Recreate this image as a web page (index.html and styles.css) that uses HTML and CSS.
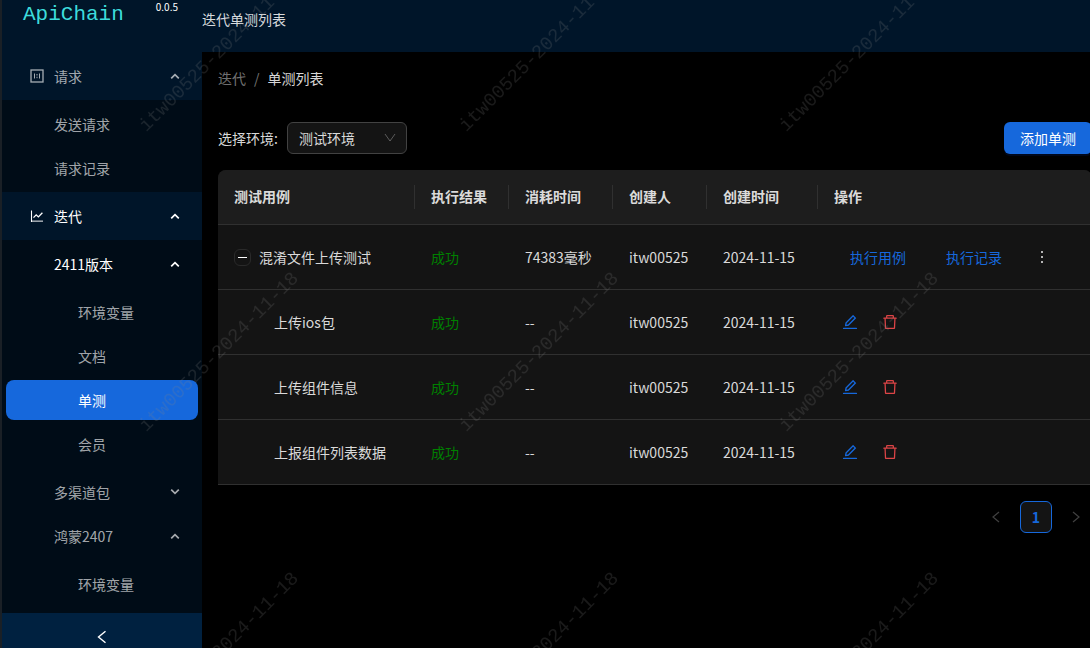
FILE: index.html
```
<!DOCTYPE html>
<html lang="zh-CN">
<head>
    <meta charset="UTF-8">
    <meta name="viewport" content="width=device-width, initial-scale=1.0">
    <title>ApiChain - 迭代单测列表</title>
    <link rel="stylesheet" href="styles.css">
</head>
<body>
    <!-- shared icons -->
    <svg class="sprite" aria-hidden="true">
        <symbol id="icon-arrow" viewBox="0 0 10 10"><path d="M1.2 7.400 5 3.600l3.800 3.800" fill="none" stroke="currentColor" stroke-width="1.7"/></symbol>
        <symbol id="icon-left" viewBox="0 0 12 12"><path d="M9 1 3 6l6 5" fill="none" stroke="currentColor" stroke-width="1.2"/></symbol>
        <symbol id="icon-edit" viewBox="0 0 1024 1024"><path fill="currentColor" d="M257.700 752c2 0 4-.2 6-.5L431.900 722c2-.4 3.900-1.300 5.300-2.800l423.900-423.900a9.960 9.960 0 0 0 0-14.100L694.900 114.900c-1.900-1.900-4.400-2.900-7.100-2.900s-5.200 1-7.100 2.900L256.800 538.800c-1.500 1.500-2.400 3.300-2.800 5.300l-29.500 168.200a33.500 33.500 0 0 0 9.400 29.800c6.600 6.400 14.900 9.900 23.800 9.900zm67.400-174.400L687.800 215l73.300 73.300-362.700 362.600-88.900 15.700 15.600-89zM880 836H144c-17.700 0-32 14.300-32 32v36c0 4.400 3.600 8 8 8h784c4.400 0 8-3.600 8-8v-36c0-17.700-14.300-32-32-32z"/></symbol>
        <symbol id="icon-delete" viewBox="0 0 1024 1024"><path fill="currentColor" d="M360 184h-8c4.400 0 8-3.600 8-8v8h304v-8c0 4.400 3.600 8 8 8h-8v72h72v-80c0-35.300-28.700-64-64-64H352c-35.300 0-64 28.700-64 64v80h72v-72zm504 72H160c-17.700 0-32 14.300-32 32v32c0 4.400 3.600 8 8 8h60.400l24.700 523c1.600 34.100 29.800 61 63.900 61h454c34.200 0 62.300-26.800 63.900-61l24.700-523H888c4.400 0 8-3.600 8-8v-32c0-17.700-14.300-32-32-32zM731.300 840H292.700l-24.200-512h487l-24.200 512z"/></symbol>
    </svg>

    <aside class="sider">
        <div class="brand">
            <span class="logo">ApiChain</span>
            <span class="version">0.0.5</span>
        </div>
        <nav class="menu">
            <ul>
                <li>
                    <button class="menu-item">
                        <svg class="menu-icon" viewBox="0 0 14 14" fill="none" stroke="currentColor"><rect x="1" y="1" width="12" height="12" stroke-width="1.3"/><path d="M4.500 4.500v5M9.500 4.500v5M7 5v1.500M7 7.700v1.500"/></svg>
                        <span>请求</span>
                        <svg class="arrow"><use href="#icon-arrow"/></svg>
                    </button>
                    <ul class="sub">
                        <li><a class="menu-item level-2" href="#">发送请求</a></li>
                        <li><a class="menu-item level-2" href="#">请求记录</a></li>
                    </ul>
                </li>
                <li>
                    <button class="menu-item open">
                        <svg class="menu-icon" viewBox="0 0 14 14" fill="none" stroke="currentColor"><path d="M1.500 1.500V13" stroke-width="1.100"/><path d="M1 12.200h12" stroke-width="1.600" stroke-opacity=".6"/><path d="m3.500 8.600 2.700-2.800 2.200 2.100 4-4.100" stroke-width="1.300"/></svg>
                        <span>迭代</span>
                        <svg class="arrow"><use href="#icon-arrow"/></svg>
                    </button>
                    <ul class="sub">
                        <li>
                            <button class="menu-item level-2 open"><span>2411版本</span><svg class="arrow"><use href="#icon-arrow"/></svg></button>
                            <ul class="sub">
                                <li><a class="menu-item level-3" href="#">环境变量</a></li>
                                <li><a class="menu-item level-3" href="#">文档</a></li>
                                <li><a class="menu-item level-3 selected" href="#">单测</a></li>
                                <li><a class="menu-item level-3" href="#">会员</a></li>
                            </ul>
                        </li>
                        <li>
                            <button class="menu-item level-2"><span>多渠道包</span><svg class="arrow down"><use href="#icon-arrow"/></svg></button>
                        </li>
                        <li>
                            <button class="menu-item level-2"><span>鸿蒙2407</span><svg class="arrow"><use href="#icon-arrow"/></svg></button>
                            <ul class="sub last">
                                <li><a class="menu-item level-3" href="#">环境变量</a></li>
                            </ul>
                        </li>
                    </ul>
                </li>
            </ul>
        </nav>
        <button class="trigger" aria-label="收起菜单"><svg><use href="#icon-left"/></svg></button>
    </aside>

    <div class="layout">
        <header class="header">迭代单测列表</header>
        <main class="content">
            <nav class="breadcrumb">
                <a href="#">迭代</a>
                <span class="separator">/</span>
                <span>单测列表</span>
            </nav>

            <div class="toolbar">
                <label for="env">选择环境:</label>
                <div class="select">
                    <select id="env" name="env">
                        <option>测试环境</option>
                    </select>
                    <svg class="select-arrow" viewBox="0 0 12 12"><path d="m1 2 5 7 5-7" fill="none" stroke="currentColor"/></svg>
                </div>
                <button class="btn-primary">添加单测</button>
            </div>

            <table class="table">
                <colgroup>
                    <col class="col-name">
                    <col class="col-result">
                    <col class="col-cost">
                    <col class="col-user">
                    <col class="col-time">
                    <col>
                </colgroup>
                <thead>
                    <tr>
                        <th>测试用例</th>
                        <th>执行结果</th>
                        <th>消耗时间</th>
                        <th>创建人</th>
                        <th>创建时间</th>
                        <th>操作</th>
                    </tr>
                </thead>
                <tbody>
                    <tr>
                        <td><div class="name"><button class="expand" aria-label="收起"></button>混淆文件上传测试</div></td>
                        <td class="success">成功</td>
                        <td>74383毫秒</td>
                        <td>itw00525</td>
                        <td>2024-11-15</td>
                        <td>
                            <div class="actions">
                                <button class="btn-link">执行用例</button>
                                <button class="btn-link">执行记录</button>
                                <button class="btn-icon more" aria-label="更多"><svg viewBox="0 0 18 18" fill="currentColor"><path d="M8 3h2v2H8zM8 8h2v2H8zM8 13h2v2H8z"/></svg></button>
                            </div>
                        </td>
                    </tr>
                    <tr>
                        <td class="child">上传ios包</td>
                        <td class="success">成功</td>
                        <td>--</td>
                        <td>itw00525</td>
                        <td>2024-11-15</td>
                        <td>
                            <div class="actions">
                                <button class="btn-icon edit" aria-label="编辑"><svg><use href="#icon-edit"/></svg></button>
                                <button class="btn-icon delete" aria-label="删除"><svg><use href="#icon-delete"/></svg></button>
                            </div>
                        </td>
                    </tr>
                    <tr>
                        <td class="child">上传组件信息</td>
                        <td class="success">成功</td>
                        <td>--</td>
                        <td>itw00525</td>
                        <td>2024-11-15</td>
                        <td>
                            <div class="actions">
                                <button class="btn-icon edit" aria-label="编辑"><svg><use href="#icon-edit"/></svg></button>
                                <button class="btn-icon delete" aria-label="删除"><svg><use href="#icon-delete"/></svg></button>
                            </div>
                        </td>
                    </tr>
                    <tr>
                        <td class="child">上报组件列表数据</td>
                        <td class="success">成功</td>
                        <td>--</td>
                        <td>itw00525</td>
                        <td>2024-11-15</td>
                        <td>
                            <div class="actions">
                                <button class="btn-icon edit" aria-label="编辑"><svg><use href="#icon-edit"/></svg></button>
                                <button class="btn-icon delete" aria-label="删除"><svg><use href="#icon-delete"/></svg></button>
                            </div>
                        </td>
                    </tr>
                </tbody>
            </table>

            <div class="pagination">
                <button disabled aria-label="上一页"><svg><use href="#icon-left"/></svg></button>
                <button class="active">1</button>
                <button disabled aria-label="下一页"><svg class="next"><use href="#icon-left"/></svg></button>
            </div>
        </main>
    </div>

    <!-- watermark over the whole page -->
    <svg class="watermark" aria-hidden="true">
        <defs>
            <pattern id="mark" x="60" y="-100" width="320" height="300" patternUnits="userSpaceOnUse">
                <text x="158" y="156" text-anchor="middle" transform="rotate(-45 160 150)">itw00525-2024-11-18</text>
            </pattern>
        </defs>
        <rect width="100%" height="100%" fill="url(#mark)"/>
    </svg>
</body>
</html>
```
FILE: styles.css
```
* {
    box-sizing: border-box;
}
body {
    margin: 0;
    padding-left: 2px;
    display: flex;
    height: 100vh;
    overflow: hidden;
    background-color: #1a2026;
    color: rgba(255, 255, 255, 0.85);
    font-family: "Noto Sans CJK SC", sans-serif;
    font-size: 14px;
    line-height: 22px;
}
button, select {
    font: inherit;
    color: inherit;
    border: none;
    background: none;
    padding: 0;
    cursor: pointer;
}
a {
    color: inherit;
    text-decoration: none;
}
ul {
    list-style: none;
    margin: 0;
    padding: 0;
}
.sprite {
    display: none;
}

/* sider */
.sider {
    width: 200px;
    flex-shrink: 0;
    display: flex;
    flex-direction: column;
    background-color: #001529;
}
.brand {
    height: 52px;
    flex-shrink: 0;
    display: flex;
    justify-content: space-between;
    padding: 0 24px 0 21px;
}
.logo {
    font-family: "Liberation Mono", monospace;
    font-size: 21px;
    line-height: 30px;
    color: #3ddcdc;
}
.version {
    font-size: 10px;
    line-height: 14px;
    color: #fff;
}
.menu {
    flex: 1;
    min-height: 0;
    overflow: hidden;
}
.sub {
    display: flow-root;
    background-color: #000c17;
}
.sub.last {
    padding-bottom: 16px;
}
.menu-item {
    display: flex;
    align-items: center;
    width: 192px;
    height: 40px;
    margin: 4px;
    padding: 0 18px 0 24px;
    border-radius: 8px;
    color: rgba(255, 255, 255, 0.65);
}
.menu-item.level-2 {
    padding-left: 48px;
}
.menu-item.level-3 {
    padding-left: 72px;
}
.menu-item.open {
    color: #fff;
}
.menu-item.selected {
    color: #fff;
    background-color: #1668dc;
}
.menu-icon {
    width: 14px;
    height: 14px;
    margin-right: 10px;
}
.arrow {
    width: 10px;
    height: 10px;
    margin-left: auto;
}
.arrow.down {
    transform: rotate(180deg);
}
.trigger {
    flex-shrink: 0;
    display: flex;
    justify-content: center;
    padding: 17px 0 4px;
    background-color: #002140;
    color: #fff;
}
.trigger svg {
    width: 14px;
    height: 14px;
}

/* right side */
.layout {
    flex: 1;
    min-width: 0;
    overflow: hidden;
    background-color: #000;
}
.header {
    height: 52px;
    padding-top: 8px;
    background-color: #001529;
}
.content {
    padding: 15px 0 16px 16px;
    margin-right: -2px;
}
.breadcrumb {
    display: flex;
    gap: 8px;
    margin-bottom: 33px;
}
.breadcrumb a, .separator {
    color: rgba(255, 255, 255, 0.45);
}
.toolbar {
    display: flex;
    align-items: center;
    gap: 9px;
    margin-bottom: 16px;
}
.select {
    position: relative;
    width: 120px;
}
.select select {
    appearance: none;
    width: 100%;
    height: 32px;
    padding: 0 11px;
    border: 1px solid #424242;
    border-radius: 6px;
    background-color: #141414;
}
.select-arrow {
    position: absolute;
    right: 11px;
    top: 10px;
    width: 12px;
    height: 12px;
    color: rgba(255, 255, 255, 0.3);
    pointer-events: none;
}
.btn-primary {
    height: 32px;
    margin-left: auto;
    padding: 0 16px;
    border-radius: 6px;
    background-color: #1668dc;
    color: #fff;
    box-shadow: 0 2px 0 rgba(0, 21, 70, 0.4);
}

/* table */
.table {
    width: 100%;
    table-layout: fixed;
    border-collapse: separate;
    border-spacing: 0;
    background-color: #141414;
    border-radius: 8px 8px 0 0;
}
.col-name {
    width: 197px;
}
.col-result, .col-user {
    width: 94px;
}
.col-cost {
    width: 104px;
}
.col-time {
    width: 111px;
}
.table th, .table td {
    padding: 16px;
    text-align: left;
    white-space: nowrap;
    border-bottom: 1px solid #303030;
}
.table th {
    padding: 15px 16px 17px;
    background: #1d1d1d linear-gradient(#303030, #303030) no-repeat right center / 1px 24px;
    font-weight: 700;
}
.table th:first-child {
    border-top-left-radius: 8px;
}
.table th:last-child {
    border-top-right-radius: 8px;
    background-image: none;
}
.name {
    display: flex;
    align-items: center;
    gap: 8px;
}
.expand {
    display: flex;
    align-items: center;
    justify-content: center;
    width: 17px;
    height: 17px;
    border: 1px solid #2a2a2a;
    border-radius: 6px;
}
.expand::before {
    content: "";
    width: 9px;
    height: 1px;
    background-color: #fff;
}
.table .child {
    padding-left: 56px;
}
.success {
    color: green;
}
.actions {
    display: flex;
    gap: 8px;
}
.btn-link {
    height: 32px;
    padding: 0 16px;
    color: #1668dc;
}
.btn-icon {
    display: flex;
    align-items: center;
    justify-content: center;
    width: 32px;
    height: 32px;
}
.btn-icon svg {
    width: 18px;
    height: 18px;
}
.more {
    color: #b5b5b5;
}
.edit {
    color: #1668dc;
}
.delete {
    color: #dc4446;
}

/* pagination */
.pagination {
    display: flex;
    justify-content: flex-end;
    gap: 8px;
    margin-top: 16px;
}
.pagination button {
    display: flex;
    align-items: center;
    justify-content: center;
    width: 32px;
    height: 32px;
    border-radius: 6px;
    color: rgba(255, 255, 255, 0.25);
}
.pagination .active {
    border: 1px solid #1668dc;
    background-color: #141414;
    color: #1668dc;
    font-weight: 700;
}
.pagination svg {
    width: 12px;
    height: 12px;
}
.next {
    transform: rotate(180deg);
}

.watermark {
    position: absolute;
    top: 0;
    left: 0;
    width: 100%;
    height: 100%;
    pointer-events: none;
}
.watermark text {
    font-family: "Liberation Mono", monospace;
    font-size: 19px;
    fill: rgba(128, 128, 128, 0.2);
}
```
